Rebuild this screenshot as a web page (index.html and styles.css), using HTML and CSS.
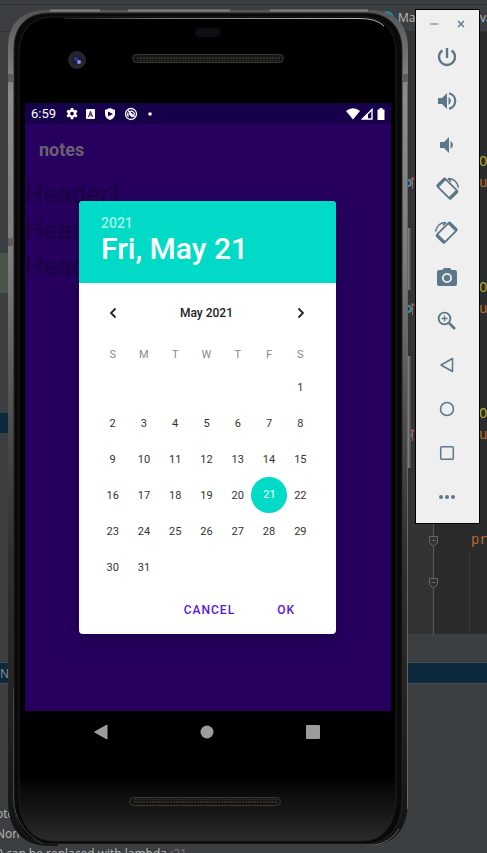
FILE: index.html
```html
<!DOCTYPE html>
<html lang="en">
<head>
<meta charset="utf-8">
<meta name="viewport" content="width=device-width, initial-scale=1">
<title>notes</title>
<link rel="stylesheet" href="styles.css">
</head>
<body>
<main class="desktop">
  <section class="ide" aria-label="Code editor">
    <div class="ide-menu"></div>
    <div class="ide-tabs">
      <svg class="tab-icon" width="14" height="14" viewBox="0 0 14 14"><circle cx="7" cy="7" r="7" fill="#2f8296"/></svg>
      <span class="tab-start">Ma</span><span>va</span>
    </div>
    <div class="ide-work">
      <div class="tree"><div class="tree-changed"></div><div class="tree-selected"></div></div>
      <div class="gutter">
        <svg class="gutter-marks" width="70" height="603" viewBox="0 0 70 603" fill="none">
          <g stroke="#3592a6" stroke-width="2"><circle cx="4" cy="151" r="3"/><circle cx="4" cy="277" r="3"/><circle cx="4" cy="403" r="3"/></g>
          <g stroke="#b5525b" stroke-width="1"><path d="M8.500 157v-11M6.500 148l2-3 2 3M8.500 283v-11M6.500 274l2-3 2 3M8.500 409v-11M6.500 400l2-3 2 3"/></g>
          <path d="M29.500 480v123" stroke="#555759"/><path d="M65.500 521v80" stroke="#393b3d"/>
          <g fill="#2f3133" stroke="#66686a"><path d="M25.500 504.500h8v6l-4 4-4-4zM27.500 508.500h4M25.500 546.500h8v6l-4 4-4-4zM27.500 550.500h4"/></g>
        </svg>
      </div>
      <div class="code">
        <div class="code-pair"><span class="method">O</span><span class="keyword">u</span></div>
        <div class="code-pair"><span class="method">O</span><span class="keyword">u</span></div>
        <div class="code-pair"><span class="method">O</span><span class="keyword">u</span></div>
        <div class="keyword">pr</div>
      </div>
    </div>
    <div class="panel-head"></div>
    <div class="panel-selected">N</div>
    <div class="panel-body">
      <p>ote</p><p>Non</p><p>0 can be replaced with lambda <span class="line-no">:21</span></p>
    </div>
  </section>

  <section class="phone" aria-label="Phone">
    <svg class="phone-frame" width="408" height="838" viewBox="0 0 408 838">
      <defs>
        <linearGradient id="metal" x1="0" y1="0" x2="0" y2="1"><stop offset="0" stop-color="#555"/><stop offset=".1" stop-color="#8c8c8c"/><stop offset=".3" stop-color="#7c7c7c"/><stop offset=".48" stop-color="#505050"/><stop offset=".65" stop-color="#303030"/><stop offset=".85" stop-color="#222"/><stop offset="1" stop-color="#111"/></linearGradient>
        <linearGradient id="glass" x1="0" y1="0" x2="0" y2="1"><stop offset="0" stop-color="#000"/><stop offset=".92" stop-color="#000"/><stop offset=".97" stop-color="#1a1a1a"/><stop offset="1" stop-color="#2b2b2b"/></linearGradient>
        <linearGradient id="edge" gradientUnits="userSpaceOnUse" x1="56" y1="0" x2="376" y2="0"><stop offset="0" stop-color="#222"/><stop offset=".3" stop-color="#777"/><stop offset="1" stop-color="#bbb"/></linearGradient>
        <linearGradient id="side" x1="0" y1="0" x2="1" y2="0"><stop offset="0" stop-color="#333"/><stop offset=".6" stop-color="#808080"/><stop offset="1" stop-color="#444"/></linearGradient>
        <pattern id="mesh" width="3" height="3" patternUnits="userSpaceOnUse"><path d="M0 1h2" stroke="#302e2a" stroke-width="2"/></pattern>
      </defs>
      <path d="M396 219h7v62h-7zM396 347h7v112h-7z" fill="url(#side)"/>
      <path d="M0 38C0 14 14 1 40 1H360C386 1 400 14 400 40V792C400 820 386 837 358 837H42C14 837 0 820 0 792Z" fill="url(#metal)"/>
      <path d="M399.500 75v725" stroke="#666" stroke-width="1"/>
      <path d="M6 40C6 18 18 4 42 4H357C381 4 394 18 394 42V790C394 818 381 835 356 835H44C18 835 6 818 6 790Z" fill="#090909" stroke="#242424"/>
      <path d="M11 44C11 22 24 8 44 8H355C376 8 388 22 388 44V788C388 814 376 832 354 832H46C23 832 11 814 11 788Z" fill="url(#glass)" stroke="#202020"/>
      <path d="M56 9.500H350Q368 9 376 17" fill="none" stroke="url(#edge)" stroke-width="1"/>
      <path d="M42 1.500H92M120 1.500H222M262 1.500H360" stroke="#858585" stroke-width="2"/>
      <path d="M50 836H366Q382 834 391 820" fill="none" stroke="#666" stroke-width="1"/>
      <path d="M5.500 680v110Q7 820 35 835" fill="none" stroke="#444"/>
      <path d="M0 65h6v8H0zM394 65h6v8h-6zM0 229h6v8H0z" fill="#5c5c5c"/>
      <circle cx="69" cy="51" r="9" fill="#27272a"/><circle cx="69" cy="51" r="5" fill="#171d42"/><circle cx="68" cy="50" r="2" fill="#303b80"/><circle cx="71" cy="53" r="2" fill="#8994df"/>
      <rect x="187" y="19" width="25" height="9" rx="4" fill="#0d0d12"/>
      <rect x="124.500" y="45.500" width="151" height="8" rx="4" fill="#161513" stroke="#3b3936"/><rect x="128" y="47" width="144" height="5" fill="url(#mesh)"/>
      <rect x="121.500" y="788.500" width="151" height="8" rx="4" fill="#161513" stroke="#3b3936"/><rect x="125" y="790" width="144" height="5" fill="url(#mesh)"/>
    </svg>

    <div class="screen">
      <header class="status">
        <span class="clock">6:59</span>
        <span class="status-icons">
          <svg width="12" height="12" viewBox="3 3 18 18" fill="#fff"><path d="M10.200 3h3.600l.5 2.500 1.700 1 2.400-.9 1.800 3.100-1.900 1.700v2l1.900 1.700-1.800 3.100-2.400-.9-1.700 1-.5 2.700h-3.600l-.5-2.700-1.700-1-2.400.9-1.800-3.100 1.900-1.700v-2L3.800 8.700l1.800-3.100 2.400.9 1.700-1zM12 8.600a2.800 2.800 0 1 0 0 5.600 2.800 2.800 0 0 0 0-5.600z" fill-rule="evenodd"/></svg>
          <svg width="10" height="12" viewBox="0 0 10 12"><rect y="1" width="9" height="10" rx="1" fill="#fff"/><path d="M2.500 9 4.500 3.500 6.500 9M3.500 7h2.500" fill="none" stroke="#17004a"/></svg>
          <svg width="12" height="12" viewBox="0 0 12 12"><path d="M6 0l5 2v4c0 3-2 5-5 6-3-1-5-3-5-6V2z" fill="#fff"/><path d="M4 3.500 9 6 4 8.500z" fill="#17004a"/></svg>
          <svg width="14" height="14" viewBox="0 0 14 14" fill="none" stroke="#fff"><circle cx="7" cy="7" r="5.500" stroke-width="1.300"/><path d="M4 3.500 10.500 10M4.500 9.500A3.500 3.500 0 0 1 4 5.500M6 4.500a3 3 0 0 1 4 4M5 6.500 8.500 10" stroke-width="1.300"/></svg>
          <svg width="4" height="4" viewBox="0 0 4 4"><circle cx="2" cy="2" r="1.800" fill="#fff"/></svg>
        </span>
        <span class="signals">
          <svg width="14" height="12" viewBox="0 0 14 12"><path d="M0 3Q7-2.500 14 3L7 11.500z" fill="#fff"/></svg>
          <svg width="12" height="12" viewBox="0 0 12 12"><path d="M1.500 11 11 1.500V11z" fill="none" stroke="#fff" stroke-width="1.400"/><path d="M1 11 7 5v6z" fill="#fff"/></svg>
          <svg width="8" height="12" viewBox="0 0 8 12"><path d="M2.500 0h3v1.500H7q.5 0 .5.500v9.500q0 .5-.5.500H1q-.5 0-.5-.5V2q0-.5.5-.5h1.500z" fill="#fff"/></svg>
        </span>
      </header>
      <h1 class="app-title">notes</h1>
      <ul class="headers"><li>Header1</li><li>Header2</li><li>Header3</li></ul>

      <div class="dialog" role="dialog" aria-label="Pick a date">
        <div class="dialog-head"><div class="year">2021</div><div class="date">Fri, May 21</div></div>
        <div class="dialog-body">
          <div class="month">
            <button class="arrow" type="button" aria-label="Previous month"><svg width="8" height="12" viewBox="0 0 8 12"><path d="M6.500 1.500 2 6l4.500 4.500" fill="none" stroke="#222" stroke-width="1.800"/></svg></button>
            <span>May 2021</span>
            <button class="arrow" type="button" aria-label="Next month"><svg width="8" height="12" viewBox="0 0 8 12"><path d="M2.500 1.500 7 6l-4.500 4.500" fill="none" stroke="#222" stroke-width="1.800"/></svg></button>
          </div>
          <table class="days">
            <thead><tr><th>S</th><th>M</th><th>T</th><th>W</th><th>T</th><th>F</th><th>S</th></tr></thead>
            <tbody>
              <tr><td></td><td></td><td></td><td></td><td></td><td></td><td>1</td></tr>
              <tr><td>2</td><td>3</td><td>4</td><td>5</td><td>6</td><td>7</td><td>8</td></tr>
              <tr><td>9</td><td>10</td><td>11</td><td>12</td><td>13</td><td>14</td><td>15</td></tr>
              <tr><td>16</td><td>17</td><td>18</td><td>19</td><td>20</td><td><span class="selected">21</span></td><td>22</td></tr>
              <tr><td>23</td><td>24</td><td>25</td><td>26</td><td>27</td><td>28</td><td>29</td></tr>
              <tr><td>30</td><td>31</td><td></td><td></td><td></td><td></td><td></td></tr>
            </tbody>
          </table>
          <div class="actions"><button type="button">CANCEL</button><button type="button">OK</button></div>
        </div>
      </div>
    </div>
    <nav class="softkeys">
      <button type="button" aria-label="Back"><svg width="16" height="16" viewBox="0 0 16 16"><path d="M14 1v14L1.500 8z" fill="#9c9c9c" stroke="#9c9c9c" stroke-linejoin="round"/></svg></button>
      <button type="button" aria-label="Home"><svg width="16" height="16" viewBox="0 0 16 16"><circle cx="8" cy="8" r="6.500" fill="#9c9c9c"/></svg></button>
      <button type="button" aria-label="Overview"><svg width="16" height="16" viewBox="0 0 16 16"><rect x="1" y="1" width="14" height="14" rx="1" fill="#9c9c9c"/></svg></button>
    </nav>
  </section>

  <aside class="tools" aria-label="Emulator controls">
    <div class="tools-head">
      <button type="button" aria-label="Minimize"><svg width="10" height="10" viewBox="0 0 10 10"><path d="M1 5h8" stroke="#999" stroke-width="1.500"/></svg></button>
      <button type="button" aria-label="Close"><svg width="10" height="10" viewBox="0 0 10 10"><path d="m2 2 6 6M8 2 2 8" stroke="#607d8b" stroke-width="1.500"/></svg></button>
    </div>
    <button class="tool" type="button" aria-label="Power"><svg width="24" height="24" viewBox="0 0 24 24"><path d="M12 3v10M7.400 5.400a8 8 0 1 0 9.200 0" fill="none" stroke="#5c7886" stroke-width="2.400"/></svg></button>
    <button class="tool" type="button" aria-label="Volume up"><svg width="24" height="24" viewBox="0 0 24 24"><path d="M3 9v6h4l5 5V4L7 9zM13.500 8v8a4.500 4.500 0 0 0 0-8z" fill="#5c7886"/><path d="M14 4.200a8 8 0 0 1 0 15.600" fill="none" stroke="#5c7886" stroke-width="2.200"/></svg></button>
    <button class="tool" type="button" aria-label="Volume down"><svg width="24" height="24" viewBox="0 0 24 24"><path d="M5 9v6h4l5 5V4L9 9zM15.500 8v8a4.500 4.500 0 0 0 0-8z" fill="#5c7886"/></svg></button>
    <button class="tool" type="button" aria-label="Rotate left"><svg width="28" height="28" viewBox="0 0 28 28" fill="none" stroke="#5c7886"><g transform="rotate(-45 14 14)"><rect x="9" y="4.500" width="11" height="19" rx="1.500" stroke-width="1.800"/><path d="M9 5.500h11M9 22.500h11" stroke-width="3"/></g><path d="M15 3.500q8.500 0 10.500 9M15 3.500l3 3" stroke-width="1.500"/></svg></button>
    <button class="tool" type="button" aria-label="Rotate right"><svg width="28" height="28" viewBox="0 0 28 28" fill="none" stroke="#5c7886"><g transform="translate(28 0) scale(-1 1)"><g transform="rotate(-45 14 14)"><rect x="9" y="4.500" width="11" height="19" rx="1.500" stroke-width="1.800"/><path d="M9 5.500h11M9 22.500h11" stroke-width="3"/></g><path d="M15 3.500q8.500 0 10.500 9M15 3.500l3 3" stroke-width="1.500"/></g></svg></button>
    <button class="tool" type="button" aria-label="Take screenshot"><svg width="24" height="24" viewBox="0 0 24 24"><path d="M9 3 7.200 5H4a2 2 0 0 0-2 2v12a2 2 0 0 0 2 2h16a2 2 0 0 0 2-2V7a2 2 0 0 0-2-2h-3.200L15 3zm3 5a5 5 0 1 1 0 10 5 5 0 0 1 0-10z" fill="#5c7886" fill-rule="evenodd"/><circle cx="12" cy="13" r="3.200" fill="#5c7886"/></svg></button>
    <button class="tool" type="button" aria-label="Zoom"><svg width="24" height="24" viewBox="0 0 24 24" fill="none" stroke="#5c7886"><circle cx="9.500" cy="9.500" r="5.900" stroke-width="1.900"/><path d="m14 14 6 6" stroke-width="2.600"/><path d="M9.500 6.500v6M6.500 9.500h6" stroke-width="1.300"/></svg></button>
    <button class="tool" type="button" aria-label="Back"><svg width="24" height="24" viewBox="0 0 24 24"><path d="M17.500 5.500v13L6 12z" fill="none" stroke="#5c7886" stroke-width="1.500" stroke-linejoin="round"/></svg></button>
    <button class="tool" type="button" aria-label="Home"><svg width="24" height="24" viewBox="0 0 24 24"><circle cx="12" cy="12" r="6.500" fill="none" stroke="#5c7886" stroke-width="1.500"/></svg></button>
    <button class="tool" type="button" aria-label="Overview"><svg width="24" height="24" viewBox="0 0 24 24"><rect x="5.700" y="5.700" width="12.600" height="12.600" rx="1" fill="none" stroke="#5c7886" stroke-width="1.500"/></svg></button>
    <button class="tool" type="button" aria-label="More"><svg width="24" height="24" viewBox="0 0 24 24" fill="#5c7886"><circle cx="6" cy="12" r="2"/><circle cx="12" cy="12" r="2"/><circle cx="18" cy="12" r="2"/></svg></button>
  </aside>
</main>
</body>
</html>
```
FILE: styles.css
```css
* { box-sizing: border-box; }
body { margin: 0; background: #3c3f41; font-family: Roboto, sans-serif; }
button { margin: 0; padding: 0; border: 0; background: none; font: inherit; letter-spacing: inherit; color: inherit; display: flex; align-items: center; justify-content: center; }
svg { display: block; flex: none; }
h1, p, ul { margin: 0; padding: 0; }

.desktop { position: relative; min-height: 100vh; overflow: hidden; }

/* Editor behind the emulator */
.ide { position: absolute; inset: 0; display: flex; flex-direction: column; color: #bbb; font: 12px/20px "Open Sans", sans-serif; }
.ide-menu { height: 5px; border-bottom: 1px solid #303234; }
.ide-tabs { height: 27px; border-bottom: 1px solid #303234; display: flex; align-items: center; padding-left: 380px; gap: 4px; }
.tab-start { width: 78px; flex: none; }
.ide-work { display: grid; grid-template-columns: 404px 29px 1fr; height: 602px; flex: none; }
.tree { padding-top: 221px; }
.tree-changed { height: 40px; background: #49544a; }
.tree-selected { height: 20px; margin-top: 120px; background: #0d293e; }
.gutter { position: relative; background: #313335; }
.gutter-marks { position: absolute; left: 0; top: 0; }
.code { background: #2b2b2b; padding: 120px 0 0 38px; display: flex; flex-direction: column; gap: 84px; font: 14px/21px "Liberation Mono", monospace; }
.code-pair { display: flex; flex-direction: column; padding-left: 8px; }
.method { color: #a9a32c; }
.keyword { color: #b86c32; }
.panel-head { height: 29px; flex: none; border-bottom: 1px solid #4b4e50; }
.panel-selected { height: 20px; flex: none; background: #0d293e; color: #8c9399; line-height: 22px; }
.panel-body { flex: 1; border-top: 1px solid #4b4e50; padding-top: 120px; overflow: hidden; white-space: nowrap; text-indent: -4px; }
.line-no { color: #777; }

/* Phone */
.phone { position: absolute; left: 8px; top: 9px; width: 400px; padding: 94px 17px 92px; }
.phone-frame { position: absolute; left: 0; top: 0; }
.screen { position: relative; height: 608px; background: #27005f; }
.status { height: 21px; padding: 0 6px; background: #17004a; color: #fff; display: flex; align-items: center; }
.clock { font-size: 13px; width: 35px; }
.status-icons { display: flex; align-items: center; gap: 8px; }
.status-icons svg:last-child { margin-left: 2px; }
.signals { margin-left: auto; display: flex; align-items: center; gap: 1px; }
.signals svg:last-child { margin-left: 3px; }
.app-title { padding: 0 14px; font-size: 18px; line-height: 52px; font-weight: 700; color: #6a6070; }
.headers { list-style: none; font-size: 26px; line-height: 36px; color: #180041; }
.softkeys { position: relative; height: 42px; padding: 0 70px 0 68px; display: flex; align-items: center; justify-content: space-between; }

/* Date picker */
.dialog { position: absolute; top: 98px; left: 54px; right: 55px; border-radius: 4px; overflow: hidden; background: #fff; color: #333; box-shadow: 0 8px 20px #1d0050; }
.dialog-head { height: 82px; padding: 14px 22px; background: #00dac6; color: #fff; font-weight: 500; }
.year { font-size: 14px; line-height: 16px; color: #a6f2eb; }
.date { font-size: 30px; line-height: 36px; }
.dialog-body { padding: 16px 20px 0 18px; }
.month { height: 28px; margin-bottom: 12px; display: flex; align-items: center; justify-content: space-between; font-size: 12px; font-weight: 500; color: #222; }
.arrow { width: 31px; height: 28px; }
.days { width: 100%; table-layout: fixed; border-collapse: collapse; font-size: 11px; text-align: center; }
.days th { height: 30px; padding: 0; font-weight: 400; color: #888; }
.days td { height: 36px; padding: 0; }
.selected { display: block; width: 36px; margin: 0 -2px; border-radius: 50%; background: #00dac6; color: #fff; line-height: 36px; }
.actions { height: 49px; display: flex; align-items: center; justify-content: flex-end; gap: 42px; padding-right: 21px; font-size: 12px; font-weight: 500; letter-spacing: 1px; color: #5a16dc; }

/* Emulator toolbar */
.tools { position: absolute; left: 415px; top: 9px; width: 65px; padding: 0 1px 4px 0; border: 1px solid #000; background: #efefef; }
.tools-head { height: 25px; padding: 2px 12px 0 13px; display: flex; align-items: center; justify-content: space-between; }
.tool { width: 100%; height: 44px; }
```
